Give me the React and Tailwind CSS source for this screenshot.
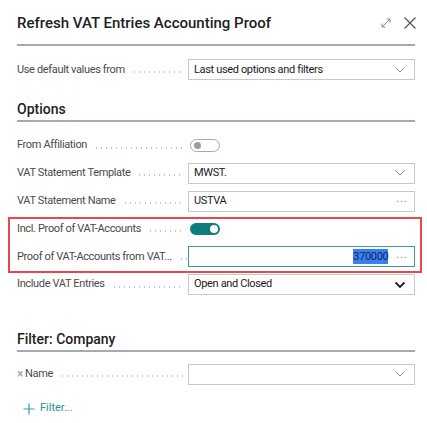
import { useState } from 'react';

const font = { fontFamily: '"Segoe UI", Roboto, "Noto Sans", sans-serif' };

function Leader() {
  return (
    <span className="flex-1 min-w-[10px] ml-[7px] mr-[5px] h-[2px] translate-y-[2px] bg-[radial-gradient(circle,#c4c4c4_0.5px,transparent_0.9px)] bg-[length:5px_2px] bg-repeat-x" />
  );
}

function Row({ label, children, clear }) {
  return (
    <div className="flex items-center h-[27.8px]">
      <div className="w-[171px] flex items-center text-[11px] tracking-[-0.35px] text-[#4a4a4a] whitespace-nowrap">
        {clear && <span className="text-[12px] text-[#9a9a9a] mr-[2px]">×</span>}
        <span>{label}</span>
        <Leader />
      </div>
      <div className="flex-1 flex items-center">{children}</div>
    </div>
  );
}

function Chevron({ bold }) {
  return (
    <svg width="12" height="8" viewBox="0 0 12 8" className="mr-[4px]">
      <path
        d="M1.5 1.5 L6 6 L10.5 1.5"
        fill="none"
        stroke={bold ? '#1f1f1f' : '#8a8a8a'}
        strokeWidth={bold ? 1.8 : 1}
      />
    </svg>
  );
}

function Box({ value, icon, teal, children, bold }) {
  return (
    <div
      className={
        'w-full h-[21px] flex items-center pl-[5px] pr-[4px] text-[11px] tracking-[-0.35px] text-[#1a1a1a] bg-white border ' +
        (teal ? 'border-[#3b9c9c] border-[1.5px]' : 'border-[#c8c8c8]')
      }
    >
      <span className="flex-1 truncate">{value}</span>
      {children}
      {icon === 'chev' && <Chevron bold={bold} />}
      {icon === 'dots' && <span className="text-[#7a7a7a] text-[11px] tracking-[1px] mr-[2px] -translate-y-[2px]">...</span>}
    </div>
  );
}

function Toggle({ on }) {
  return on ? (
    <div className="ml-[2px] w-[30px] h-[12px] rounded-full bg-[#0e7d7d] flex items-center justify-end pr-[2px]">
      <div className="w-[8px] h-[8px] rounded-full bg-white" />
    </div>
  ) : (
    <div className="ml-[2px] w-[30px] h-[13px] rounded-full border border-[#a8a8a8] bg-white flex items-center pl-[3px]">
      <div className="w-[7px] h-[7px] rounded-full bg-[#9b9b9b]" />
    </div>
  );
}

export default function App() {
  const [proofOn] = useState(true);

  return (
    <div className="w-[427px] h-[423px] bg-white overflow-hidden relative" style={font}>
      <div className="pl-[17px] pr-[12px]">
        <div className="flex items-center h-[46px] border-b-2 border-[#a4a9b3] pt-[2px]">
          <h1 className="flex-1 text-[15px] font-medium text-[#212121]">Refresh VAT Entries Accounting Proof</h1>
          <svg width="12" height="12" viewBox="0 0 12 12" className="mr-[11px]">
            <path d="M2 10 L10 2 M6.5 2 H10 V5.5 M2 6.5 V10 H5.5" fill="none" stroke="#8a8a8a" strokeWidth="1" />
          </svg>
          <svg width="14" height="14" viewBox="0 0 14 14" className="mr-[-2px]">
            <path d="M1.5 1.5 L12.5 12.5 M12.5 1.5 L1.5 12.5" fill="none" stroke="#555" strokeWidth="1.2" />
          </svg>
        </div>

        <div className="mt-[10px]">
          <Row label="Use default values from">
            <Box value="Last used options and filters" icon="chev" />
          </Row>
        </div>

        <div className="mt-[15px] border-b-2 border-[#a4a9b3] pb-[1px]">
          <h2 className="text-[14px] font-medium text-[#212121] leading-[20px]">Options</h2>
        </div>

        <div className="mt-[10px]">
          <Row label="From Affiliation">
            <Toggle on={false} />
          </Row>
          <Row label="VAT Statement Template">
            <Box value="MWST." icon="chev" />
          </Row>
          <Row label="VAT Statement Name">
            <Box value="USTVA" icon="dots" />
          </Row>
          <div className="relative">
            <Row label="Incl. Proof of VAT-Accounts">
              <Toggle on={proofOn} />
            </Row>
            <Row label="Proof of VAT-Accounts from VAT...">
              <Box value="" icon="dots" teal>
                <span className="bg-[#3a7ff0] text-[#0d2a66] mr-[8px] leading-[15px]">370000</span>
              </Box>
            </Row>
            <div className="absolute top-[2px] -bottom-[2px] -left-[9px] -right-[7px] border-2 border-[#e5484d] pointer-events-none" />
          </div>
          <Row label="Include VAT Entries">
            <Box value="Open and Closed" icon="chev" bold />
          </Row>
        </div>

        <div className="mt-[30px] border-b-2 border-[#a4a9b3] pb-[1px]">
          <h2 className="text-[14px] font-medium text-[#212121] leading-[20px]">Filter: Company</h2>
        </div>

        <div className="mt-[9px]">
          <Row label="Name" clear>
            <Box value="" icon="chev" />
          </Row>
        </div>

        <div className="flex items-center mt-[12px] ml-[6px] text-[11px] text-[#2a8f95]">
          <svg width="12" height="12" viewBox="0 0 12 12" className="mr-[5px]">
            <path d="M6 0.5 V11.5 M0.5 6 H11.5" fill="none" stroke="#3a9ea3" strokeWidth="1.2" />
          </svg>
          <span>Filter...</span>
        </div>
      </div>
    </div>
  );
}
